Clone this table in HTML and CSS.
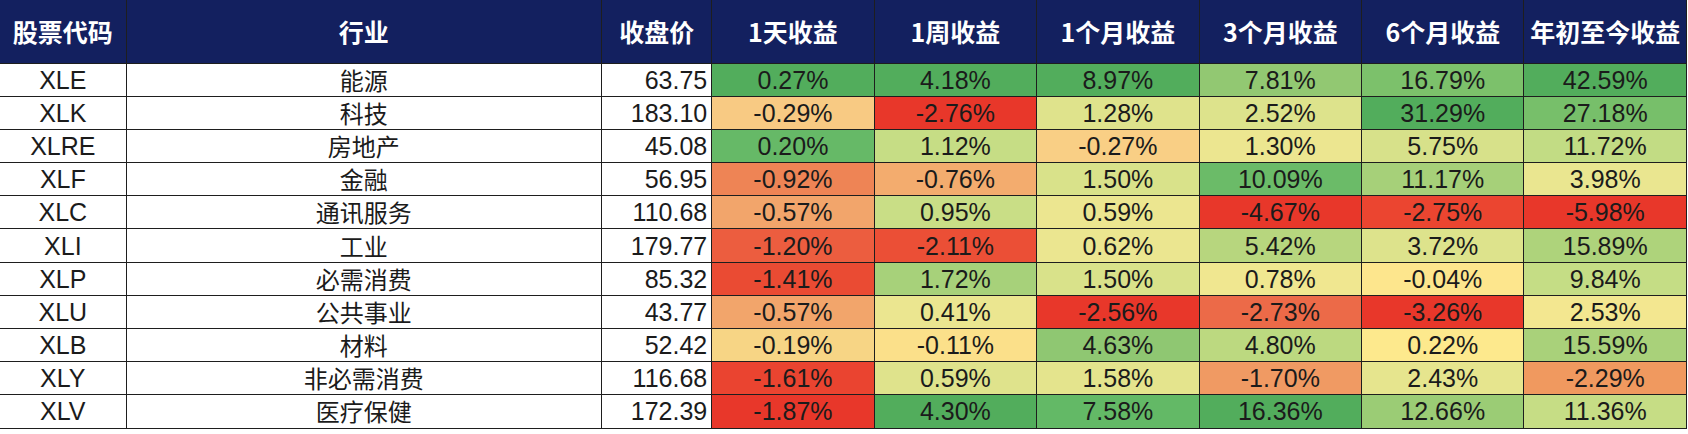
FILE: index.html
```html
<!DOCTYPE html>
<html lang="zh-CN">
<head>
<meta charset="utf-8">
<title>行业ETF收益</title>
<link rel="stylesheet" href="styles.css">
</head>
<body>
<table class="perf">
  <colgroup>
    <col class="c-code"><col class="c-ind"><col class="c-price">
    <col class="c-ret"><col class="c-ret"><col class="c-ret"><col class="c-ret"><col class="c-ret"><col class="c-ret">
  </colgroup>
  <thead>
    <tr>
      <th>股票代码</th><th>行业</th><th>收盘价</th><th>1天收益</th><th>1周收益</th><th>1个月收益</th><th>3个月收益</th><th>6个月收益</th><th>年初至今收益</th>
    </tr>
  </thead>
  <tbody>
    <tr><td>XLE</td><td class="cn">能源</td><td class="num">63.75</td>
      <td style="background:#52ad5c">0.27%</td><td style="background:#52ad5c">4.18%</td><td style="background:#52ad5c">8.97%</td><td style="background:#92c872">7.81%</td><td style="background:#7cc16b">16.79%</td><td style="background:#52ad5c">42.59%</td></tr>
    <tr><td>XLK</td><td class="cn">科技</td><td class="num">183.10</td>
      <td style="background:#f8ca83">-0.29%</td><td style="background:#e8372a">-2.76%</td><td style="background:#dfe38c">1.28%</td><td style="background:#dde38c">2.52%</td><td style="background:#52ad5c">31.29%</td><td style="background:#77bf6a">27.18%</td></tr>
    <tr><td>XLRE</td><td class="cn">房地产</td><td class="num">45.08</td>
      <td style="background:#66b967">0.20%</td><td style="background:#c6dd85">1.12%</td><td style="background:#f9cf85">-0.27%</td><td style="background:#ece690">1.30%</td><td style="background:#d7e18a">5.75%</td><td style="background:#c2dc84">11.72%</td></tr>
    <tr><td>XLF</td><td class="cn">金融</td><td class="num">56.95</td>
      <td style="background:#ee8455">-0.92%</td><td style="background:#f3ac6e">-0.76%</td><td style="background:#d9e28a">1.50%</td><td style="background:#6bbb68">10.09%</td><td style="background:#a6d079">11.17%</td><td style="background:#eae690">3.98%</td></tr>
    <tr><td>XLC</td><td class="cn">通讯服务</td><td class="num">110.68</td>
      <td style="background:#f2a56b">-0.57%</td><td style="background:#c9de86">0.95%</td><td style="background:#ece690">0.59%</td><td style="background:#e8372a">-4.67%</td><td style="background:#eb4530">-2.75%</td><td style="background:#e8372a">-5.98%</td></tr>
    <tr><td>XLI</td><td class="cn">工业</td><td class="num">179.77</td>
      <td style="background:#ec5d3f">-1.20%</td><td style="background:#eb4f36">-2.11%</td><td style="background:#ebe690">0.62%</td><td style="background:#b7d67e">5.42%</td><td style="background:#dde38c">3.72%</td><td style="background:#aed37b">15.89%</td></tr>
    <tr><td>XLP</td><td class="cn">必需消费</td><td class="num">85.32</td>
      <td style="background:#ea4b33">-1.41%</td><td style="background:#a7d17a">1.72%</td><td style="background:#d9e28a">1.50%</td><td style="background:#f0e790">0.78%</td><td style="background:#fde68d">-0.04%</td><td style="background:#c5dd85">9.84%</td></tr>
    <tr><td>XLU</td><td class="cn">公共事业</td><td class="num">43.77</td>
      <td style="background:#f2a56b">-0.57%</td><td style="background:#ebe690">0.41%</td><td style="background:#e8372a">-2.56%</td><td style="background:#ec6a48">-2.73%</td><td style="background:#e8372a">-3.26%</td><td style="background:#f3e790">2.53%</td></tr>
    <tr><td>XLB</td><td class="cn">材料</td><td class="num">52.42</td>
      <td style="background:#f7d585">-0.19%</td><td style="background:#fbe08a">-0.11%</td><td style="background:#8fc772">4.63%</td><td style="background:#bcd980">4.80%</td><td style="background:#fde98d">0.22%</td><td style="background:#a9d17a">15.59%</td></tr>
    <tr><td>XLY</td><td class="cn">非必需消费</td><td class="num">116.68</td>
      <td style="background:#ea4430">-1.61%</td><td style="background:#dfe38c">0.59%</td><td style="background:#e4e48d">1.58%</td><td style="background:#f09a63">-1.70%</td><td style="background:#e6e58e">2.43%</td><td style="background:#f0995f">-2.29%</td></tr>
    <tr><td>XLV</td><td class="cn">医疗保健</td><td class="num">172.39</td>
      <td style="background:#e8372a">-1.87%</td><td style="background:#52ad5c">4.30%</td><td style="background:#63b966">7.58%</td><td style="background:#52ad5c">16.36%</td><td style="background:#9bcc75">12.66%</td><td style="background:#c6dd85">11.36%</td></tr>
  </tbody>
</table>
</body>
</html>
```

FILE: styles.css
```css
html, body {
  margin: 0;
  padding: 0;
  background: #ffffff;
}

.perf {
  border-collapse: collapse;
  table-layout: fixed;
  width: 1687px;
  font-family: "Liberation Sans", "Noto Sans CJK SC", sans-serif;
  color: #1b1b1b;
}

.c-code { width: 126px; }
.c-ind { width: 475px; }
.c-price { width: 110px; }
.c-ret { width: 162.3px; }

.perf th,
.perf td {
  border: 1px solid #1e1e1e;
  padding: 0;
  text-align: center;
  vertical-align: middle;
  white-space: nowrap;
  overflow: hidden;
}

.perf thead th {
  border-top: none;
  border-left: none;
}

.perf thead tr {
  height: 63px;
}

.perf th {
  background: #13205f;
  color: #ffffff;
  font-family: "Noto Sans CJK SC", "Liberation Sans", sans-serif;
  font-weight: 700;
  font-size: 25px;
  line-height: 30px;
}

.perf tbody tr {
  height: 33.2px;
}

.perf td {
  font-size: 25px;
  line-height: 30px;
}

.perf tbody td:first-child {
  border-left: none;
}

.perf td.cn {
  font-family: "Noto Sans CJK SC", sans-serif;
  font-size: 24px;
}

.perf td.num {
  text-align: right;
  padding-right: 4px;
}
```
